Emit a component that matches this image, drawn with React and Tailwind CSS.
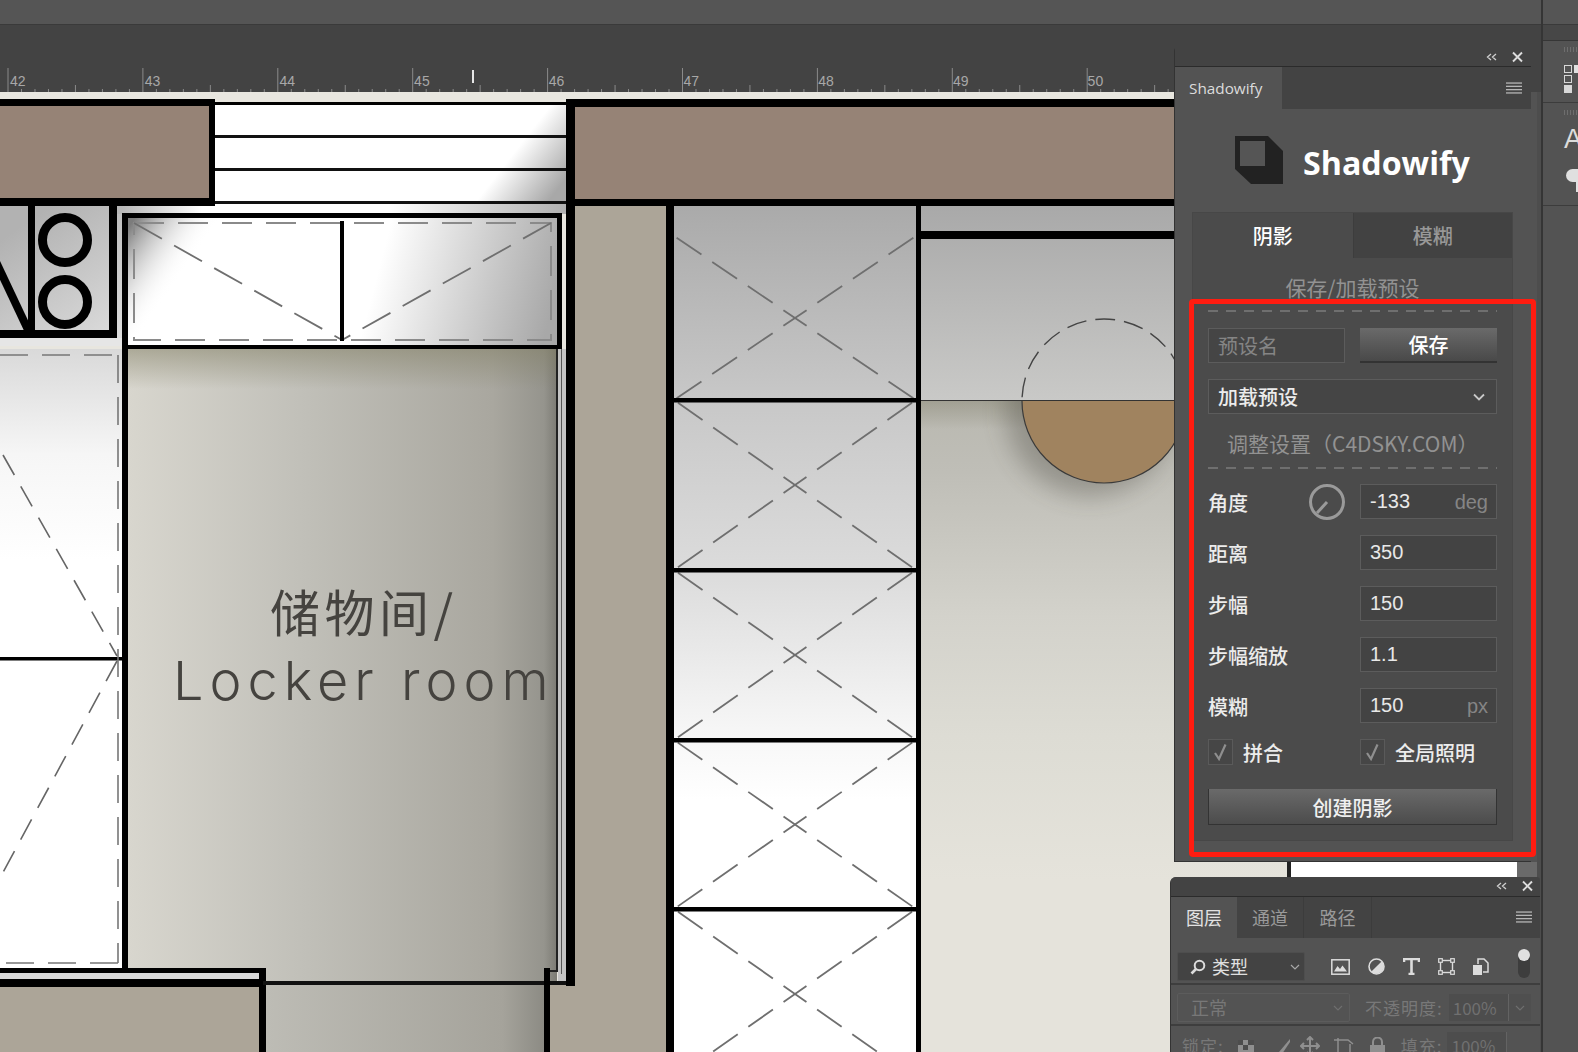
const ui = { fontFamily: '"Noto Sans CJK SC", sans-serif' };

const cjk = "font-['Noto_Sans_CJK_SC',sans-serif]";
const num = "font-['Liberation_Sans','Noto_Sans_CJK_SC',sans-serif]";

function Ruler() {
  const ticks = [];
  for (let i = 0; i < 92; i++) ticks.push(8 + i * 13.49);
  const labels = [42, 43, 44, 45, 46, 47, 48, 49, 50];
  return (
    <svg width="1541" height="24" viewBox="0 68 1541 24" className="block bg-[#434343]">
      {ticks.map((x, i) => (
        <line
          key={i}
          x1={x}
          x2={x}
          y1={i % 10 === 0 ? 68 : i % 5 === 0 ? 85 : 89}
          y2="92"
          stroke="#8a8a8a"
          strokeWidth="1"
        />
      ))}
      {labels.map((n, i) => (
        <text key={n} x={10 + i * 134.7} y="86" fontSize="14" fill="#a8a8a8" fontFamily="Liberation Sans">
          {n}
        </text>
      ))}
      <rect x="472" y="70" width="2" height="13" fill="#e6e6e6" />
    </svg>
  );
}

function Cross({ x1, x2, y1, y2 }) {
  const cx = (x1 + x2) / 2;
  const cy = (y1 + y2) / 2;
  const corners = [
    [x1, y1],
    [x2, y1],
    [x1, y2],
    [x2, y2],
  ];
  return (
    <g stroke="#6f6f6f" strokeWidth="1.8">
      {corners.map(([x, y], i) => (
        <line key={i} x1={cx} y1={cy} x2={x} y2={y} strokeDasharray="14 13 30 13 30 13 30 13" />
      ))}
    </g>
  );
}

function FloorPlan() {
  const rows = [236, 400, 570, 740, 909, 1079];
  return (
    <svg width="1541" height="960" viewBox="0 92 1541 960" className="block">
      <defs>
        <linearGradient id="stair" gradientUnits="userSpaceOnUse" x1="520" y1="145" x2="565" y2="180">
          <stop offset="0" stopColor="#ffffff" />
          <stop offset="1" stopColor="#a8a8a8" />
        </linearGradient>
        <linearGradient id="strip" gradientUnits="userSpaceOnUse" x1="122" y1="0" x2="566" y2="0">
          <stop offset="0" stopColor="#b8b8b8" />
          <stop offset="0.18" stopColor="#ffffff" />
          <stop offset="0.6" stopColor="#ffffff" />
          <stop offset="1" stopColor="#b0b0b0" />
        </linearGradient>
        <linearGradient id="wardR" gradientUnits="userSpaceOnUse" x1="385" y1="245" x2="557" y2="290">
          <stop offset="0" stopColor="#ffffff" />
          <stop offset="1" stopColor="#a8a8a8" />
        </linearGradient>
        <linearGradient id="wardL" gradientUnits="userSpaceOnUse" x1="132" y1="222" x2="190" y2="262">
          <stop offset="0" stopColor="#7c7c7c" />
          <stop offset="1" stopColor="#ffffff" stopOpacity="0" />
        </linearGradient>
        <linearGradient id="locker" gradientUnits="userSpaceOnUse" x1="128" y1="0" x2="557" y2="0">
          <stop offset="0" stopColor="#d8d6ce" />
          <stop offset="0.4" stopColor="#c1c0b9" />
          <stop offset="0.85" stopColor="#a9a79f" />
          <stop offset="0.97" stopColor="#95948d" />
          <stop offset="1" stopColor="#7c7b74" />
        </linearGradient>
        <linearGradient id="lockerTop" x1="0" y1="0" x2="0" y2="1">
          <stop offset="0" stopColor="#807d62" stopOpacity="0.5" />
          <stop offset="1" stopColor="#807d62" stopOpacity="0" />
        </linearGradient>
        <linearGradient id="corridor" gradientUnits="userSpaceOnUse" x1="266" y1="0" x2="544" y2="0">
          <stop offset="0" stopColor="#bdbcb5" />
          <stop offset="0.85" stopColor="#a5a39b" />
          <stop offset="1" stopColor="#8c8b84" />
        </linearGradient>
        <linearGradient id="leftRoom" gradientUnits="userSpaceOnUse" x1="0" y1="349" x2="0" y2="560">
          <stop offset="0" stopColor="#d9d9d9" />
          <stop offset="0.5" stopColor="#f6f6f6" />
          <stop offset="1" stopColor="#ffffff" />
        </linearGradient>
        <linearGradient id="fixture" gradientUnits="userSpaceOnUse" x1="30" y1="220" x2="115" y2="345">
          <stop offset="0" stopColor="#b2b2b2" />
          <stop offset="1" stopColor="#dedede" />
        </linearGradient>
        <linearGradient id="closet" gradientUnits="userSpaceOnUse" x1="0" y1="206" x2="0" y2="800">
          <stop offset="0" stopColor="#aaaaaa" />
          <stop offset="0.33" stopColor="#c8c8c8" />
          <stop offset="0.62" stopColor="#dcdcdc" />
          <stop offset="0.88" stopColor="#f6f6f6" />
          <stop offset="1" stopColor="#ffffff" />
        </linearGradient>
        <linearGradient id="bath" gradientUnits="userSpaceOnUse" x1="0" y1="206" x2="0" y2="400">
          <stop offset="0" stopColor="#a9a9a9" />
          <stop offset="1" stopColor="#c9c9c7" />
        </linearGradient>
        <linearGradient id="floor" gradientUnits="userSpaceOnUse" x1="0" y1="400" x2="0" y2="880">
          <stop offset="0" stopColor="#b9b8b0" />
          <stop offset="0.15" stopColor="#bfbeb7" />
          <stop offset="0.45" stopColor="#d3d2cb" />
          <stop offset="0.7" stopColor="#dddcd4" />
          <stop offset="1" stopColor="#e5e3db" />
        </linearGradient>
        <linearGradient id="floorTop" x1="0" y1="0" x2="0" y2="1">
          <stop offset="0" stopColor="#8a8876" stopOpacity="0.5" />
          <stop offset="1" stopColor="#8a8876" stopOpacity="0" />
        </linearGradient>
        <filter id="blur" x="-30%" y="-30%" width="160%" height="160%">
          <feGaussianBlur stdDeviation="12" />
        </filter>
        <clipPath id="belowLine">
          <rect x="921" y="401" width="300" height="140" />
        </clipPath>
        <clipPath id="upperHalf">
          <rect x="1000" y="300" width="220" height="100" />
        </clipPath>
      </defs>

      <rect x="0" y="92" width="1541" height="960" fill="#e8e6df" />

      {/* top wall and beams */}
      <rect x="215" y="105" width="351" height="98" fill="#ffffff" />
      <rect x="400" y="105" width="166" height="98" fill="url(#stair)" />
      <rect x="0" y="99" width="215" height="7" fill="#000" />
      <rect x="214" y="102" width="352" height="3" fill="#000" />
      <rect x="0" y="106" width="209" height="92" fill="#968376" />
      <rect x="209" y="99" width="6" height="107" fill="#000" />
      <rect x="0" y="198" width="215" height="8" fill="#000" />
      <rect x="215" y="135" width="351" height="3" fill="#111" />
      <rect x="215" y="168" width="351" height="3" fill="#111" />
      <rect x="215" y="201" width="351" height="3" fill="#111" />
      <rect x="575" y="106" width="966" height="93" fill="#968376" />
      <rect x="566" y="99" width="975" height="8" fill="#000" />
      <rect x="566" y="199" width="975" height="7" fill="#000" />

      {/* fixture top left */}
      <rect x="0" y="206" width="122" height="139" fill="url(#fixture)" />
      <rect x="0" y="338" width="122" height="8" fill="#e6e6e6" />
      <rect x="215" y="204" width="351" height="10" fill="url(#strip)" />
      <rect x="117" y="206" width="100" height="8" fill="url(#strip)" />
      <rect x="28" y="200" width="7" height="138" fill="#000" />
      <rect x="109" y="200" width="8" height="138" fill="#000" />
      <rect x="0" y="330" width="117" height="8" fill="#000" />
      <line x1="-4" y1="262" x2="30" y2="334" stroke="#000" strokeWidth="8" />
      <circle cx="65" cy="240" r="22.5" fill="none" stroke="#000" strokeWidth="9" />
      <circle cx="65" cy="302" r="22.5" fill="none" stroke="#000" strokeWidth="9" />

      {/* wardrobe */}
      <rect x="128" y="218" width="429" height="127" fill="url(#wardR)" />
      <rect x="128" y="218" width="90" height="127" fill="url(#wardL)" />
      <rect x="122" y="213" width="440" height="5" fill="#000" />
      <rect x="557" y="213" width="5" height="136" fill="#000" />
      <rect x="122" y="345" width="440" height="4" fill="#000" />
      <rect x="134" y="223" width="417" height="117" fill="none" stroke="#8a8a8a" strokeWidth="2" strokeDasharray="30 14" />
      <g stroke="#6f6f6f" strokeWidth="1.8" strokeDasharray="32 14">
        <line x1="134" y1="223" x2="342" y2="340" />
        <line x1="551" y1="223" x2="342" y2="340" />
      </g>
      <rect x="340" y="221" width="4" height="120" fill="#000" />

      {/* locker room */}
      <rect x="128" y="349" width="429" height="632" fill="url(#locker)" />
      <rect x="128" y="349" width="429" height="40" fill="url(#lockerTop)" />
      <rect x="558" y="349" width="8" height="632" fill="#c4c4c4" />
      <rect x="556" y="349" width="2" height="622" fill="#222" />
      <rect x="561" y="349" width="1" height="625" fill="#555" />
      <rect x="545" y="970" width="13" height="2" fill="#222" />
      <text x="270" y="632" fontSize="50" letterSpacing="4.5" fill="#45433f" fontFamily="Noto Sans CJK SC" fontWeight="400">
        储物间/
      </text>
      <text x="173" y="700" fontSize="54" letterSpacing="6" fill="#45433f" fontFamily="Inter" fontWeight="300">
        Locker room
      </text>

      {/* left room */}
      <rect x="0" y="349" width="123" height="620" fill="url(#leftRoom)" />
      <rect x="0" y="657" width="127" height="3.5" fill="#000" />
      <g stroke="#777" strokeWidth="1.6" fill="none" strokeDasharray="28 14">
        <line x1="0" y1="355" x2="118" y2="355" />
        <line x1="118" y1="355" x2="118" y2="963" />
        <line x1="118" y1="963" x2="0" y2="963" />
      </g>
      <g stroke="#666" strokeWidth="1.6" strokeDasharray="23 13">
        <line x1="3" y1="455" x2="117" y2="656" />
        <line x1="117" y1="661" x2="0" y2="878" />
      </g>
      <rect x="122" y="213" width="6" height="757" fill="#000" />

      {/* bottom left walls */}
      <rect x="0" y="973" width="260" height="6" fill="#d8d8d8" />
      <rect x="0" y="968" width="263" height="5" fill="#000" />
      <rect x="0" y="979" width="266" height="8" fill="#000" />
      <rect x="0" y="987" width="259" height="65" fill="#aca598" />
      <rect x="259" y="968" width="7" height="84" fill="#000" />
      <rect x="266" y="985" width="278" height="67" fill="url(#corridor)" />
      <rect x="263" y="981" width="311" height="4" fill="#111" />
      <rect x="544" y="968" width="6" height="84" fill="#000" />
      <rect x="550" y="985" width="116" height="67" fill="#aca598" />

      {/* column wall */}
      <rect x="566" y="99" width="9" height="887" fill="#000" />
      <rect x="575" y="206" width="91" height="779" fill="#aca598" />
      <rect x="666" y="206" width="8" height="846" fill="#000" />
      <rect x="674" y="206" width="242" height="846" fill="url(#closet)" />
      {rows.slice(0, -1).map((y, i) => (
        <Cross key={y} x1={674} x2={916} y1={y} y2={rows[i + 1]} />
      ))}
      {rows.slice(1, -1).map((y) => (
        <rect key={y} x="670" y={y - 2} width="250" height="4.5" fill="#000" />
      ))}
      <rect x="916" y="206" width="5" height="846" fill="#000" />

      {/* room on the right */}
      <rect x="921" y="206" width="620" height="194" fill="url(#bath)" />
      <rect x="917" y="231" width="624" height="8" fill="#000" />
      <rect x="921" y="400" width="620" height="652" fill="url(#floor)" />
      <rect x="921" y="401" width="620" height="28" fill="url(#floorTop)" />
      <g clipPath="url(#belowLine)">
        <circle cx="1090" cy="412" r="84" fill="#3d3b30" opacity="0.32" filter="url(#blur)" />
      </g>
      <rect x="921" y="400" width="620" height="1" fill="#333" />
      <path d="M1022 401 A82 82 0 0 0 1186 401 Z" fill="#a0835f" />
      <path d="M1022 401 A82 82 0 0 0 1186 401" fill="none" stroke="#3a3a3a" strokeWidth="1.2" />
      <circle cx="1104" cy="401" r="82" fill="none" stroke="#444" strokeWidth="1.4" strokeDasharray="20 9" clipPath="url(#upperHalf)" />

      {/* what shows between the two panels */}
      <rect x="1287" y="855" width="4" height="30" fill="#222" />
      <rect x="1291" y="855" width="226" height="30" fill="#ffffff" />
      <rect x="1517" y="855" width="20" height="30" fill="#6a6a6a" />
      <rect x="1531" y="92" width="6" height="770" fill="#535353" />
      <rect x="1537" y="92" width="4" height="960" fill="#4d4d4d" />
    </svg>
  );
}

function MenuIcon() {
  return (
    <svg width="16" height="12" viewBox="0 0 16 12">
      {[1, 4.3, 7.6, 10.9].map((y) => (
        <rect key={y} x="0" y={y - 0.6} width="16" height="1.3" fill="#b5b5b5" />
      ))}
    </svg>
  );
}

function PanelControls() {
  return (
    <svg width="37" height="12" viewBox="0 0 37 12" className="block">
      <path d="M5 3 L1.5 6 L5 9 M10 3 L6.5 6 L10 9" fill="none" stroke="#cfcfcf" strokeWidth="1.3" />
      <path d="M27 1.5 L36 10.5 M36 1.5 L27 10.5" fill="none" stroke="#dcdcdc" strokeWidth="1.9" />
    </svg>
  );
}

function Dashes({ className }) {
  return (
    <div
      className={`h-[2px] bg-[repeating-linear-gradient(90deg,#6f6f6f_0_10px,transparent_10px_18px)] ${className}`}
    />
  );
}

function Field({ value, unit }) {
  return (
    <div className={`w-[137px] h-[35px] bg-[#434343] border border-[#5c5c5c] flex items-center justify-between pl-[9px] pr-[8px] text-[20px] ${num}`}>
      <span className="text-[#e8e8e8] pb-[2px]">{value}</span>
      {unit && <span className="text-[#858585]">{unit}</span>}
    </div>
  );
}

function Row({ label, children, mt }) {
  return (
    <div className={`flex items-center justify-between h-[35px] ${mt}`}>
      <span className={`pt-[2px] text-[20px] leading-none font-medium text-[#ececec] ${cjk}`}>{label}</span>
      {children}
    </div>
  );
}

function Check({ label }) {
  return (
    <div className="flex items-center gap-[10px]">
      <span className="w-[25px] h-[26px] bg-[#464646] border border-[#5a5a5a] flex items-center justify-center">
        <svg width="15" height="18" viewBox="0 0 15 18">
          <path d="M2 10 L6 16 L12.5 1.5" fill="none" stroke="#8f8f8f" strokeWidth="2.2" />
        </svg>
      </span>
      <span className={`pt-[2px] text-[20px] leading-none font-medium text-[#ececec] ${cjk}`}>{label}</span>
    </div>
  );
}

function ShadowifyPanel() {
  return (
    <div className="absolute left-[1174px] top-[48px] w-[357px] h-[814px] bg-[#535353] border-l border-b border-[#333] rounded-tl-[3px] flex flex-col">
      <div className="h-[18px] bg-[#434343] flex items-center justify-end pr-[8px]">
        <PanelControls />
      </div>
      <div className="h-[1px] bg-[#2b2b2b]" />
      <div className="h-[42px] bg-[#434343] flex items-stretch justify-between pr-[9px]">
        <div className="w-[107px] bg-[#535353] flex items-center pl-[14px] text-[15.3px] text-[#dcdcdc] font-['Open_Sans',sans-serif]">
          Shadowify
        </div>
        <div className="flex items-center">
          <MenuIcon />
        </div>
      </div>
      <div className="h-[103px] pl-[60px] flex items-center gap-[20px]">
        <svg width="48" height="48" viewBox="0 0 48 48" className="mt-[-2px]">
          <path d="M0 0 H33 L48 15 V48 H16 L0 33 Z" fill="#222222" />
          <rect x="5" y="5" width="25" height="25" fill="#555555" />
        </svg>
        <span className="pt-[5px] text-[32.2px] leading-none font-bold text-white font-['Open_Sans',sans-serif]">Shadowify</span>
      </div>
      <div className="ml-[17px] w-[321px] h-[629px] border border-[#474747] flex flex-col">
        <div className={`h-[45px] grid grid-cols-2 text-[20px] font-medium ${cjk}`}>
          <div className="bg-[#4b4b4b] flex items-center justify-center text-white">阴影</div>
          <div className="bg-[#424242] flex items-center justify-center text-[#989898] border-l border-[#3d3d3d]">模糊</div>
        </div>
        <div className="flex-1 bg-[#4b4b4b] px-[15px] flex flex-col">
          <div className={`mt-[15px] h-[28px] leading-[28px] text-center text-[21px] text-[#929292] ${cjk}`}>保存/加载预设</div>
          <Dashes className="mt-[9px]" />
          <div className="mt-[16px] flex justify-between">
            <div className={`w-[137px] h-[35px] bg-[#454545] border border-[#5c5c5c] pl-[9px] flex items-center text-[20px] text-[#858585] ${cjk}`}>预设名</div>
            <div className={`w-[137px] h-[35px] bg-linear-to-b from-[#6a6a6a] to-[#494949] border-b-2 border-[#333] flex items-center justify-center text-[20px] font-medium text-white ${cjk}`}>保存</div>
          </div>
          <div className={`mt-[16px] h-[35px] bg-[#454545] border border-[#5c5c5c] pl-[9px] pr-[11px] flex items-center justify-between text-[20px] font-medium text-[#ececec] ${cjk}`}>
            <span>加载预设</span>
            <svg width="12" height="8" viewBox="0 0 12 8">
              <path d="M1 1.5 L6 6.5 L11 1.5" fill="none" stroke="#c8c8c8" strokeWidth="1.8" />
            </svg>
          </div>
          <div className={`mt-[14px] h-[30px] leading-[30px] pl-[19px] text-[21px] text-[#929292] whitespace-nowrap ${cjk}`}>调整设置（C4DSKY.COM）</div>
          <Dashes className="mt-[9px]" />
          <Row label="角度" mt="mt-[15px]">
            <div className="flex items-center gap-[14px]">
              <svg width="38" height="38" viewBox="0 0 38 38">
                <circle cx="19" cy="19" r="16.5" fill="none" stroke="#9a9a9a" strokeWidth="3" />
                <line x1="19" y1="19" x2="9" y2="30" stroke="#9a9a9a" strokeWidth="3" />
              </svg>
              <Field value="-133" unit="deg" />
            </div>
          </Row>
          <Row label="距离" mt="mt-[16px]">
            <Field value="350" />
          </Row>
          <Row label="步幅" mt="mt-[16px]">
            <Field value="150" />
          </Row>
          <Row label="步幅缩放" mt="mt-[16px]">
            <Field value="1.1" />
          </Row>
          <Row label="模糊" mt="mt-[16px]">
            <Field value="150" unit="px" />
          </Row>
          <div className="mt-[16px] grid grid-cols-2 gap-[15px]">
            <Check label="拼合" />
            <Check label="全局照明" />
          </div>
          <div className={`mt-[24px] h-[36px] pt-[2px] bg-linear-to-b from-[#6a6a6a] to-[#4c4c4c] border-b border-x border-[#333] flex items-center justify-center text-[20px] font-medium text-[#f0f0f0] ${cjk}`}>创建阴影</div>
        </div>
      </div>
    </div>
  );
}

function LayersPanel() {
  return (
    <div className="absolute left-[1170px] top-[877px] w-[370px] h-[175px] bg-[#535353] border-l border-[#333] rounded-tl-[6px] rounded-tr-[3px] overflow-hidden flex flex-col">
      <div className="h-[19px] bg-[#434343] flex items-center justify-end pr-[7px]">
        <PanelControls />
      </div>
      <div className="h-[1px] bg-[#2b2b2b]" />
      <div className={`h-[42px] bg-[#434343] flex items-stretch text-[18px] ${cjk}`}>
        <div className="w-[66px] bg-[#535353] flex items-center justify-center text-[#e2e2e2]">图层</div>
        <div className="w-[67px] border-r border-[#3c3c3c] flex items-center justify-center text-[#9a9a9a]">通道</div>
        <div className="w-[68px] border-r border-[#3c3c3c] flex items-center justify-center text-[#9a9a9a]">路径</div>
        <div className="flex-1 flex items-center justify-end pr-[8px]">
          <MenuIcon />
        </div>
      </div>
      <div className="h-[47px] pt-[13px] flex items-center pl-[6px] border-b-2 border-[#3e3e3e]">
        <div className={`w-[128px] h-[29px] bg-[#434343] border border-[#4e4e4e] rounded-[2px] flex items-center pl-[12px] pr-[4px] text-[18px] text-[#e0e0e0] ${cjk}`}>
          <svg width="16" height="16" viewBox="0 0 16 16" className="mr-[6px]">
            <circle cx="9.5" cy="6.5" r="4.8" fill="none" stroke="#dcdcdc" strokeWidth="2" />
            <line x1="6" y1="10" x2="1.5" y2="14.5" stroke="#dcdcdc" strokeWidth="2.6" />
          </svg>
          <span className="flex-1">类型</span>
          <svg width="10" height="6" viewBox="0 0 10 6">
            <path d="M1 1 L5 5 L9 1" fill="none" stroke="#a8a8a8" strokeWidth="1.2" />
          </svg>
        </div>
        <div className="ml-[26px] flex items-center gap-[18px]">
          <svg width="19" height="16" viewBox="0 0 19 16">
            <rect x="0.8" y="0.8" width="17.4" height="14.4" fill="none" stroke="#dcdcdc" strokeWidth="1.5" />
            <path d="M3 12.5 L6.5 7 L9 10 L11.5 6.5 L16 12.5 Z" fill="#dcdcdc" />
          </svg>
          <svg width="17" height="17" viewBox="0 0 17 17">
            <circle cx="8.5" cy="8.5" r="7.5" fill="none" stroke="#dcdcdc" strokeWidth="1.6" />
            <path d="M13.8 3.2 A7.5 7.5 0 0 1 3.2 13.8 Z" fill="#dcdcdc" />
          </svg>
          <svg width="17" height="17" viewBox="0 0 17 17">
            <path d="M1 4 V1 H16 V4 M8.5 1 V16 M5.5 16 H11.5" fill="none" stroke="#dcdcdc" strokeWidth="2.6" />
          </svg>
          <svg width="17" height="17" viewBox="0 0 17 17">
            <rect x="2.5" y="2.5" width="12" height="12" fill="none" stroke="#dcdcdc" strokeWidth="1.4" />
            {[0, 12].map((x) =>
              [0, 12].map((y) => (
                <rect key={`${x}-${y}`} x={x + 0.7} y={y + 0.7} width="3.6" height="3.6" fill="#535353" stroke="#dcdcdc" strokeWidth="1.2" />
              ))
            )}
          </svg>
          <svg width="16" height="17" viewBox="0 0 16 17">
            <path d="M5 6 V1 H11 L15 5 V14 H10" fill="none" stroke="#dcdcdc" strokeWidth="1.5" />
            <rect x="0" y="7" width="9" height="10" fill="#dcdcdc" />
          </svg>
        </div>
        <div className="ml-[29px] mt-[-6px] relative w-[12px] h-[29px] rounded-full bg-[#3d3d3d]">
          <div className="absolute left-[0px] top-[0px] w-[12px] h-[12px] rounded-full bg-[#e0e0e0]" />
        </div>
      </div>
      <div className={`h-[42px] pt-[7px] flex items-center pl-[6px] border-b-2 border-[#3e3e3e] text-[#787878] ${cjk}`}>
        <div className="w-[173px] h-[29px] border border-[#5c5c5c] rounded-[2px] pl-[13px] pr-[6px] flex items-center justify-between text-[18px]">
          <span>正常</span>
          <svg width="10" height="6" viewBox="0 0 10 6">
            <path d="M1 1 L5 5 L9 1" fill="none" stroke="#6e6e6e" strokeWidth="1.2" />
          </svg>
        </div>
        <span className="ml-[15px] text-[17px] whitespace-nowrap tracking-[1px]">不透明度:</span>
        <div className="ml-[6px] w-[60px] h-[27px] bg-[#4d4d4d] border-r border-[#636363] pl-[4px] flex items-center text-[17px] text-[#707070]">100%</div>
        <div className="w-[22px] h-[27px] bg-[#4f4f4f] flex items-center justify-center">
          <svg width="10" height="6" viewBox="0 0 10 6">
            <path d="M1 1 L5 5 L9 1" fill="none" stroke="#6e6e6e" strokeWidth="1.2" />
          </svg>
        </div>
      </div>
      <div className={`h-[26px] pt-[7px] flex items-start pl-[11px] text-[17px] text-[#787878] whitespace-nowrap ${cjk}`}>
        <span className="tracking-[1px]">锁定:</span>
        <svg width="16" height="16" viewBox="0 0 16 16" className="ml-[14px] mt-[7px]">
          <rect width="16" height="16" fill="#8f8f8f" />
          <rect x="0" y="0" width="5" height="5" fill="#4d4d4d" />
          <rect x="10" y="0" width="6" height="5" fill="#4d4d4d" />
          <rect x="5" y="5" width="5" height="5" fill="#4d4d4d" />
        </svg>
        <svg width="16" height="18" viewBox="0 0 16 18" className="ml-[22px] mt-[5px]">
          <path d="M14 1 L3 14 L1 18 L6 16 L14 4 Z" fill="#8f8f8f" />
        </svg>
        <svg width="20" height="20" viewBox="0 0 20 20" className="ml-[8px] mt-[3px]">
          <path d="M10 1 V19 M1 10 H19 M7 4 L10 1 L13 4 M7 16 L10 19 L13 16 M4 7 L1 10 L4 13 M16 7 L19 10 L16 13" fill="none" stroke="#8f8f8f" strokeWidth="2" />
        </svg>
        <svg width="20" height="18" viewBox="0 0 20 18" className="ml-[14px] mt-[5px]">
          <path d="M0 2 H14 L19 6 M4 0 V18 M16 6 V18" fill="none" stroke="#8f8f8f" strokeWidth="1.5" />
        </svg>
        <svg width="15" height="18" viewBox="0 0 15 18" className="ml-[16px] mt-[4px]">
          <path d="M3 8 V5 A4.5 4.5 0 0 1 12 5 V8" fill="none" stroke="#8f8f8f" strokeWidth="2" />
          <rect x="0" y="8" width="15" height="10" fill="#8f8f8f" />
        </svg>
        <span className="ml-[16px] tracking-[1px]">填充:</span>
        <div className="ml-[5px] mt-[-1px] w-[60px] h-[27px] bg-[#4d4d4d] border-r border-[#636363] pl-[4px] flex items-center text-[#707070]">100%</div>
      </div>
    </div>
  );
}

function RightDock() {
  return (
    <aside className="w-[37px] flex flex-col border-l-2 border-[#353535] bg-[#4e4e4e]">
      <div className="h-[24px] bg-[#555555]" />
      <div className="h-[1px] bg-[#3a3a3a]" />
      <div className="h-[16px] bg-[#474747] border-b border-[#363636]" />
      <div className="h-[62px] border-b border-[#3c3c3c] bg-[#535353] pl-[21px] pt-[6px] flex flex-col">
        <div className="h-[5px] w-[14px] bg-[repeating-linear-gradient(90deg,#6e6e6e_0_1px,transparent_1px_3px)]" />
        <div className="mt-[13px] flex gap-[2px]">
          <div className="flex flex-col gap-[2px]">
            <span className="w-[8px] h-[8px] border border-[#d8d8d8]" />
            <span className="w-[8px] h-[8px] border border-[#d8d8d8]" />
            <span className="w-[8px] h-[8px] bg-[#d8d8d8]" />
          </div>
          <span className="w-[4px] h-[8px] bg-[#e0e0e0]" />
        </div>
      </div>
      <div className="h-[103px] border-b border-[#3c3c3c] bg-[#535353] pl-[21px] pt-[7px] flex flex-col">
        <div className="h-[5px] w-[14px] bg-[repeating-linear-gradient(90deg,#6e6e6e_0_1px,transparent_1px_3px)]" />
        <span className="mt-[6px] text-[27px] leading-[36px] font-['Liberation_Sans',sans-serif] text-[#dcdcdc]">A</span>
        <span className="mt-[12px] ml-[2px] w-[24px] h-[13px] rounded-l-full bg-[#e0e0e0]" />
        <span className="ml-[12px] w-[3px] h-[10px] bg-[#e0e0e0]" />
      </div>
      <div className="flex-1 bg-[#535353]" />
    </aside>
  );
}

export default function App() {
  return (
    <div className="relative w-[1578px] h-[1052px] overflow-hidden bg-[#535353] flex" style={ui}>
      <main className="w-[1541px] flex flex-col">
        <div className="h-[24px] bg-[#555555]" />
        <div className="h-[1px] bg-[#3a3a3a]" />
        <div className="h-[43px] bg-[#434343]" />
        <Ruler />
        <FloorPlan />
      </main>
      <RightDock />
      <ShadowifyPanel />
      <LayersPanel />
      {/* red highlight drawn over the screenshot */}
      <div className="absolute left-[1189px] top-[299px] w-[347px] h-[558px] border-[5px] border-[#ff1c10] rounded-[4px] pointer-events-none" />
    </div>
  );
}
